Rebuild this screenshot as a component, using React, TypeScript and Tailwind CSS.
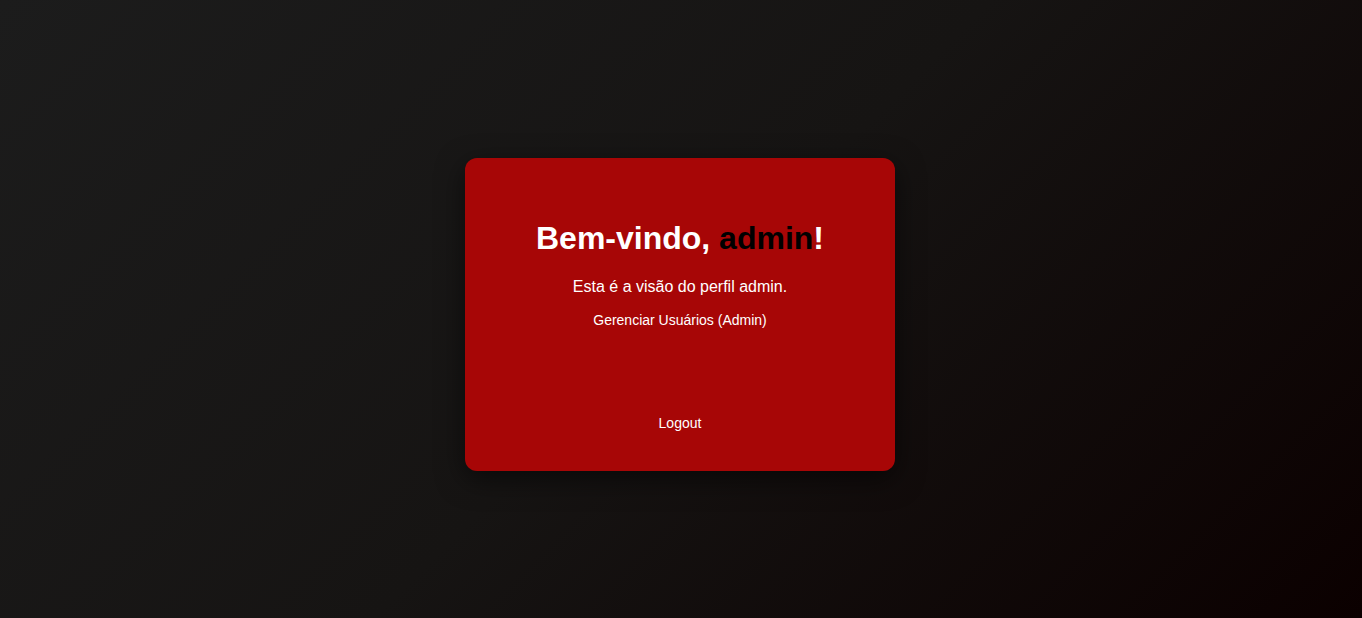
export default function App() {
  return (
    <div
      className="min-h-screen w-full flex items-center justify-center pt-[11px] bg-[linear-gradient(135deg,#1c1c1c_0%,#161413_50%,#0b0000_100%)]"
      style={{ fontFamily: '"Liberation Sans", Arial, sans-serif' }}
    >
      <div className="w-[430px] h-[313px] -ml-[2px] rounded-[12px] bg-[#a70606] shadow-[0_8px_28px_rgba(0,0,0,0.55)] flex flex-col items-center pt-[62px] pb-[40px] text-white">
        <h1 className="text-[32px] leading-[37px] font-bold">
          Bem-vindo, <span className="text-black">admin</span>!
        </h1>
        <p className="mt-[21px] text-[16px] leading-[18px]">Esta é a visão do perfil admin.</p>
        <a className="mt-[16px] text-[14px] leading-[16px] cursor-pointer">Gerenciar Usuários (Admin)</a>
        <button className="mt-auto text-[14px] leading-[16px]">Logout</button>
      </div>
    </div>
  );
}
